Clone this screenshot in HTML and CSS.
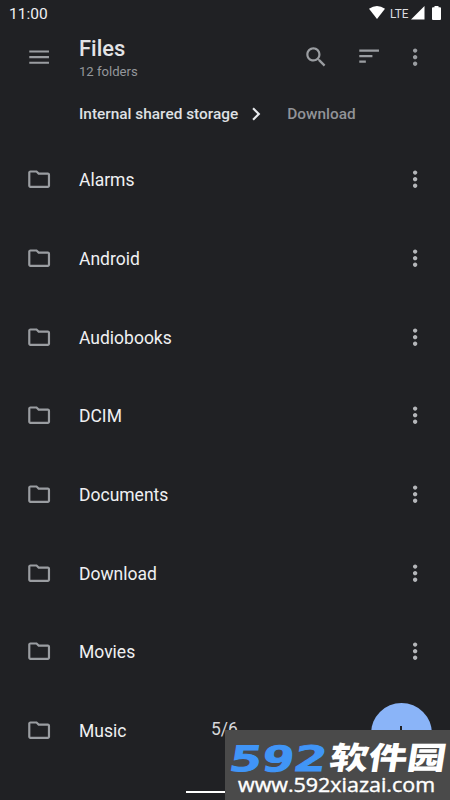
FILE: index.html
```html
<!DOCTYPE html>
<html lang="en">
<head>
<meta charset="utf-8">
<title>Files</title>
<link rel="stylesheet" href="styles.css">
</head>
<body>
<svg class="defs" aria-hidden="true">
  <symbol id="folder" viewBox="0 0 24 24"><path d="M9.17 6l2 2H20v10H4V6h5.17M10 4H4c-1.1 0-1.99.9-1.99 2L2 18c0 1.1.9 2 2 2h16c1.1 0 2-.9 2-2V8c0-1.1-.9-2-2-2h-8l-2-2z"/></symbol>
  <symbol id="more" viewBox="0 0 24 24"><path d="M12 8c1.1 0 2-.9 2-2s-.9-2-2-2-2 .9-2 2 .9 2 2 2zm0 2c-1.1 0-2 .9-2 2s.9 2 2 2 2-.9 2-2-.9-2-2-2zm0 6c-1.1 0-2 .9-2 2s.9 2 2 2 2-.9 2-2-.9-2-2-2z"/></symbol>
</svg>
<div class="screen">
  <div class="status">
    <span class="clock">11:00</span>
    <svg class="signals" viewBox="0 0 84 26">
      <path d="M4 8.800Q12 3.200 20 8.800L12 19Z"/>
      <text x="25" y="17.500" textLength="18.500" lengthAdjust="spacingAndGlyphs">LTE</text>
      <path d="M46 19.500H59.500V6Z"/>
      <path d="M67 8.200q0-1 1-1H69.500V6h4v1.200h1.500q1 0 1 1V19q0 1-1 1h-7q-1 0-1-1Z"/>
    </svg>
  </div>
  <header class="bar">
    <svg class="icon menu" viewBox="0 0 24 24"><path d="M3 18h18v-1.700H3v1.700zm0-5h18v-2H3v2zm0-7v1.700h18V6H3z"/></svg>
    <div class="heading">
      <h1>Files</h1>
      <p>12 folders</p>
    </div>
    <svg class="icon search" viewBox="0 0 24 24"><path d="M15.500 14h-.79l-.28-.27C15.410 12.590 16 11.110 16 9.500 16 5.910 13.090 3 9.500 3S3 5.910 3 9.500 5.910 16 9.500 16c1.610 0 3.090-.59 4.230-1.570l.27.28v.79l5 4.990L20.490 19l-4.990-5zm-6 0C7.010 14 5 11.990 5 9.500S7.010 5 9.500 5 14 7.010 14 9.500 11.990 14 9.500 14z"/></svg>
    <svg class="icon sort" viewBox="0 0 24 24"><path d="M3 18h6v-2H3v2zM3 6v2h18V6H3zm0 7h12v-2H3v2z"/></svg>
    <svg class="icon"><use href="#more"/></svg>
  </header>
  <nav class="crumbs">
    <span>Internal shared storage</span>
    <svg class="chevron" viewBox="0 0 24 24"><path d="M10 6L8.590 7.410 13.170 12l-4.580 4.590L10 18l6-6z"/></svg>
    <span class="next">Download</span>
  </nav>
  <ul class="list">
    <li><svg class="icon"><use href="#folder"/></svg><span>Alarms</span><svg class="icon more"><use href="#more"/></svg></li>
    <li><svg class="icon"><use href="#folder"/></svg><span>Android</span><svg class="icon more"><use href="#more"/></svg></li>
    <li><svg class="icon"><use href="#folder"/></svg><span>Audiobooks</span><svg class="icon more"><use href="#more"/></svg></li>
    <li><svg class="icon"><use href="#folder"/></svg><span>DCIM</span><svg class="icon more"><use href="#more"/></svg></li>
    <li><svg class="icon"><use href="#folder"/></svg><span>Documents</span><svg class="icon more"><use href="#more"/></svg></li>
    <li><svg class="icon"><use href="#folder"/></svg><span>Download</span><svg class="icon more"><use href="#more"/></svg></li>
    <li><svg class="icon"><use href="#folder"/></svg><span>Movies</span><svg class="icon more"><use href="#more"/></svg></li>
    <li><svg class="icon"><use href="#folder"/></svg><span>Music</span></li>
  </ul>
  <div class="fab"></div>
  <div class="home"></div>
  <div class="page">5/6</div>
  <svg class="mark" viewBox="0 0 225 70">
    <g transform="translate(0 41) skewX(-9)">
      <text class="num" x="3" y="0" textLength="97" lengthAdjust="spacingAndGlyphs">592</text>
      <text class="han" x="103" y="-2" textLength="116" lengthAdjust="spacingAndGlyphs">软件园</text>
    </g>
    <text class="url" x="13" y="62" textLength="197" lengthAdjust="spacingAndGlyphs">www.592xiazai.com</text>
  </svg>
</div>
</body>
</html>
```
FILE: styles.css
```css
* { box-sizing: border-box; margin: 0; padding: 0; }
body { background: #202124; font-family: Roboto, "Liberation Sans", sans-serif; overflow: hidden; }
.defs { position: absolute; width: 0; height: 0; }
.screen { position: relative; width: 450px; height: 800px; overflow: hidden; background: #202124; color: #eff0f2; }
.status { display: flex; justify-content: space-between; height: 26px; padding: 0 1px 0 9px; }
.clock { font-size: 15.500px; line-height: 28px; }
.signals { width: 84px; height: 26px; fill: #fff; }
.signals text { font-size: 13px; fill: #dcdde0; }
.icon { flex: none; width: 26.250px; height: 26.250px; fill: #9a9da1; }
.bar { display: flex; align-items: center; height: 61px; padding: 0 22px 0 26px; }
.bar .icon { margin-top: 1px; }
.bar .heading { width: 225px; margin-left: 26.750px; margin-top: 3px; }
h1 { font-size: 21.900px; line-height: 25px; font-weight: 500; color: #e3e4e6; }
.heading p { font-size: 13.100px; line-height: 17px; margin-top: 2px; color: #94979b; }
.bar .sort { margin: 0 20px 0 26.500px; }
.crumbs { display: flex; align-items: center; height: 53px; padding: 1px 0 0 79px; font-size: 15.400px; font-weight: 500; color: #dfe0e3; }
.chevron { width: 26px; height: 26px; margin: 0 18px 0 5px; fill: #e8eaed; }
.next { color: #919397; }
.list { list-style: none; }
.list li { display: flex; align-items: center; height: 78.700px; padding: 0 22px 0 26px; font-size: 17.500px; }
.list span { flex: 1; margin-left: 26.750px; padding-top: 2px; }
.list .more { fill: #b4b6b9; }
.fab { position: absolute; left: 371px; top: 703px; width: 61px; height: 61px; border-radius: 50%; background: #8ab4f8; }
.fab::after { content: ""; position: absolute; left: 29px; top: 23px; width: 2px; height: 15px; background: #202124; }
.home { position: absolute; left: 186px; top: 791px; width: 79px; height: 2px; background: #fff; }
.page { position: absolute; left: 211px; top: 719px; font-size: 17.500px; line-height: 21px; color: #d6d7da; }
.mark { position: absolute; left: 225px; top: 730px; width: 225px; height: 70px; background: #4a4a4a; }
.num { font: 700 35px "DejaVu Sans Mono", "DejaVu Sans", sans-serif; fill: #4095f7; stroke: #4095f7; stroke-width: 1px; }
.han { font: 900 31px "Noto Sans CJK SC", sans-serif; fill: #fff; }
.url { font: 500 19.500px "Open Sans", "Noto Sans", sans-serif; fill: #fff; stroke: #fff; stroke-width: 0.400px; }
```
